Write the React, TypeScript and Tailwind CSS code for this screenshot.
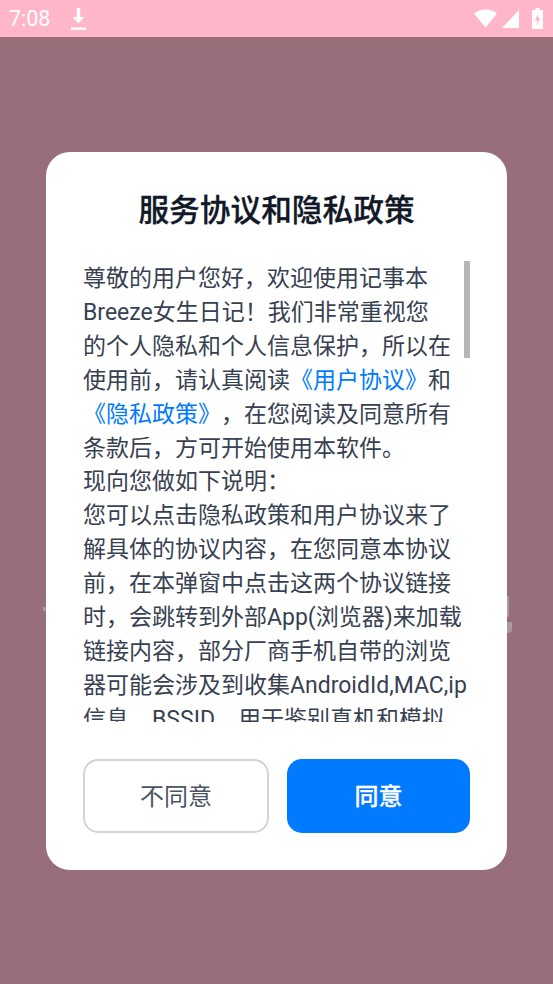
function DownloadIcon() {
  return (
    <svg width="15" height="22" viewBox="0 0 15 22" fill="white">
      <path d="M5.800 0h3.400v9h4.300L7.500 15.500 1.500 9h4.300z" />
      <rect x="0" y="19.500" width="15" height="2.300" />
    </svg>
  );
}

function StatusIcons() {
  return (
    <div className="flex items-center">
      <svg width="23" height="19" viewBox="0 0 23 19" fill="white">
        <path d="M0 4.500C3 2 7.200 0.500 11.500 0.500S20 2 23 4.500L11.500 18.500z" />
      </svg>
      <svg className="ml-[5px]" width="17" height="19" viewBox="0 0 17 19" fill="white">
        <path d="M0 19L17 1V19z" />
      </svg>
      <svg className="ml-[13px]" width="11" height="21" viewBox="0 0 11 21" fill="white">
        <path d="M3.500 0h4v2H11V21H0V2h3.500z" />
        <path d="M6.500 5L2.800 12.500h2.500L4.500 18l3.800-8H5.800z" fill="#ffb6c9" />
      </svg>
    </div>
  );
}

export default function App() {
  return (
    <div className="relative w-[553px] h-[984px] flex flex-col bg-[#986e7b] overflow-hidden font-['Roboto','Noto_Sans_CJK_SC',sans-serif] [text-spacing-trim:space-all]">
      <div className="h-[37px] shrink-0 bg-[#ffb6c9] flex items-center pl-[9px] pr-[10px] text-white">
        <span className="text-[21.500px] leading-none pt-[1px]">7:08</span>
        <div className="ml-[21px] flex">
          <DownloadIcon />
        </div>
        <div className="ml-auto">
          <StatusIcons />
        </div>
      </div>

      {/* bits of the page behind the dim layer */}
      <div className="absolute left-[43px] top-[607px] w-[3px] h-[4px] bg-[#a89aa0]" />
      <div className="absolute left-[507px] top-[596px] w-[2px] h-[21px] bg-[#a89aa0]" />
      <div className="absolute left-[507px] top-[622px] w-[5px] h-[11px] rounded-br-[4px] bg-[#a89aa0]" />

      <div className="relative flex-1 pt-[115px] px-[46px]">
        <div className="w-[461px] h-[718px] bg-white rounded-[24px] flex flex-col px-[37px]">
          <h1 className="mt-[38px] h-[40px] text-center text-[30.700px] leading-[40px] font-medium text-[#111827] [-webkit-text-stroke:0.3px_#111827] translate-y-[1px]">
            服务协议和隐私政策
          </h1>

          <div className="mt-[31px] relative h-[461px] overflow-hidden">
            <p className="pt-[1px] whitespace-nowrap text-[23px] leading-[33.900px] text-[#374151]">
              尊敬的用户您好，欢迎使用记事本
              <br />
              Breeze女生日记！我们非常重视您
              <br />
              的个人隐私和个人信息保护，所以在
              <br />
              使用前，请认真阅读<span className="text-[#007aff]">《用户协议》</span>和
              <br />
              <span className="text-[#007aff]">《隐私政策》</span>，在您阅读及同意所有
              <br />
              条款后，方可开始使用本软件。
              <br />
              现向您做如下说明：
              <br />
              您可以点击隐私政策和用户协议来了
              <br />
              解具体的协议内容，在您同意本协议
              <br />
              前，在本弹窗中点击这两个协议链接
              <br />
              时，会跳转到外部App(浏览器)来加载
              <br />
              链接内容，部分厂商手机自带的浏览
              <br />
              器可能会涉及到收集AndroidId,MAC,ip
              <br />
              信息，BSSID，用于鉴别真机和模拟
            </p>
            <div className="absolute right-0 top-0 w-[6px] h-[97px] bg-[#b5b5b5]" />
          </div>

          <div className="mt-[37px] flex gap-[18px]">
            <button className="w-[186px] h-[74px] pt-[2px] rounded-[15px] border-2 border-[#d1d5db] text-[24px] text-[#4b5563]">
              不同意
            </button>
            <button className="w-[183px] h-[74px] pt-[2px] rounded-[15px] bg-[#007aff] text-[24px] font-medium text-white [-webkit-text-stroke:0.3px_white]">
              同意
            </button>
          </div>
        </div>
      </div>
    </div>
  );
}
